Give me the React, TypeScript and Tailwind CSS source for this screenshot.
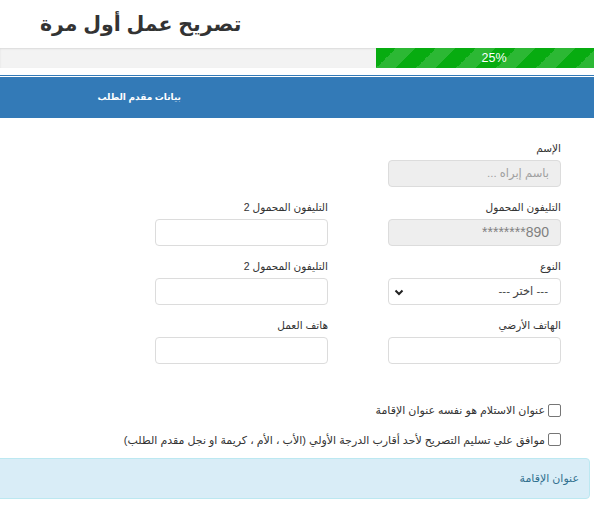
import React from "react";

const font = { fontFamily: '"Liberation Sans", "DejaVu Sans", Arial, sans-serif' };

function Label({ children }: { children: React.ReactNode }) {
  return <div className="text-[10.5px] leading-[17px] text-[#333] mb-[3px]">{children}</div>;
}

function Input({ value, placeholder, disabled }: { value?: string; placeholder?: string; disabled?: boolean }) {
  return (
    <div
      className={`h-[27px] w-[173px] rounded-[4px] border border-[#dcdcdc] flex items-center pr-[11px] ${
        disabled ? "bg-[#eeeeee]" : "bg-white"
      }`}
    >
      {value ? (
        <span dir="ltr" className="text-[14px] text-[#808080]">{value}</span>
      ) : placeholder ? (
        <span className="text-[11.5px] text-[#a0a0a0]">{placeholder}</span>
      ) : null}
    </div>
  );
}

function Select() {
  return (
    <div className="h-[27px] w-[173px] rounded-[4px] border border-[#dcdcdc] bg-white flex items-center justify-between pr-[12px] pl-[5px]">
      <span className="text-[11.5px] text-[#444]">--- اختر ---</span>
      <svg width="10" height="8" viewBox="0 0 10 8">
        <path d="M1.5 2.5 L5 6 L8.5 2.5" stroke="#222" strokeWidth="2" fill="none" />
      </svg>
    </div>
  );
}

function Field({ label, children }: { label: string; children: React.ReactNode }) {
  return (
    <div className="w-[173px]">
      <Label>{label}</Label>
      {children}
    </div>
  );
}

function Check({ label }: { label: string }) {
  return (
    <div className="flex items-center gap-[3px] text-[11px] text-[#333]">
      <div className="w-[13px] h-[13px] rounded-[2px] border border-[#767676] bg-white shrink-0" />
      <span>{label}</span>
    </div>
  );
}

export default function App() {
  return (
    <div className="w-[594px] h-[506px] bg-white overflow-hidden" style={font}>
      <div className="h-[48px] pl-[40px] pt-[6px]">
        <h1 className="text-[20.5px] font-bold text-[#333] leading-[36px]" dir="rtl" style={{ display: "inline-block" }}>
          تصريح عمل أول مرة
        </h1>
      </div>
      <div className="h-[20px] bg-[#f3f3f3] shadow-[inset_0_1px_2px_rgba(0,0,0,0.1)] flex justify-end">
        <div className="w-[218px] h-full bg-[#07ac10] bg-[linear-gradient(-45deg,rgba(255,255,255,.15)_25%,transparent_25%,transparent_50%,rgba(255,255,255,.15)_50%,rgba(255,255,255,.15)_75%,transparent_75%,transparent)] bg-[length:40px_40px] flex items-center justify-center pl-[18px] text-white text-[12.5px]">
          25%
        </div>
      </div>
      <div className="h-[7px]" />
      <div className="h-[1px] bg-[#337ab7]" />
      <div className="h-[1px]" />
      <div className="h-[41px] bg-[#337ab7] flex items-center">
        <div className="w-[181px] text-right text-white text-[9px] font-bold" dir="rtl">
          بيانات مقدم الطلب
        </div>
      </div>

      <div dir="rtl" className="pr-[33px] pt-[22px]">
        <div className="flex flex-col gap-[12px]">
          <div className="flex gap-[60px]">
            <Field label="الإسم">
              <Input disabled placeholder="باسم إبراه ..." />
            </Field>
          </div>
          <div className="flex gap-[60px]">
            <Field label="التليفون المحمول">
              <Input disabled value="********890" />
            </Field>
            <Field label="التليفون المحمول 2">
              <Input />
            </Field>
          </div>
          <div className="flex gap-[60px]">
            <Field label="النوع">
              <Select />
            </Field>
            <Field label="التليفون المحمول 2">
              <Input />
            </Field>
          </div>
          <div className="flex gap-[60px]">
            <Field label="الهاتف الأرضي">
              <Input />
            </Field>
            <Field label="هاتف العمل">
              <Input />
            </Field>
          </div>
        </div>
        <div className="mt-[38px] flex flex-col gap-[13px]">
          <Check label="عنوان الاستلام هو نفسه عنوان الإقامة" />
          <Check label="موافق علي تسليم التصريح لأحد أقارب الدرجة الأولي (الأب ، الأم ، كريمة او نجل مقدم الطلب)" />
        </div>
      </div>
      <div dir="rtl" className="mt-[10px] mr-[4px] -ml-[4px] h-[41px] bg-[#d9edf7] border border-[#bce8f1] rounded-[4px] flex items-center pr-[10px] text-[11px] text-[#31708f]">
        عنوان الإقامة
      </div>
    </div>
  );
}
